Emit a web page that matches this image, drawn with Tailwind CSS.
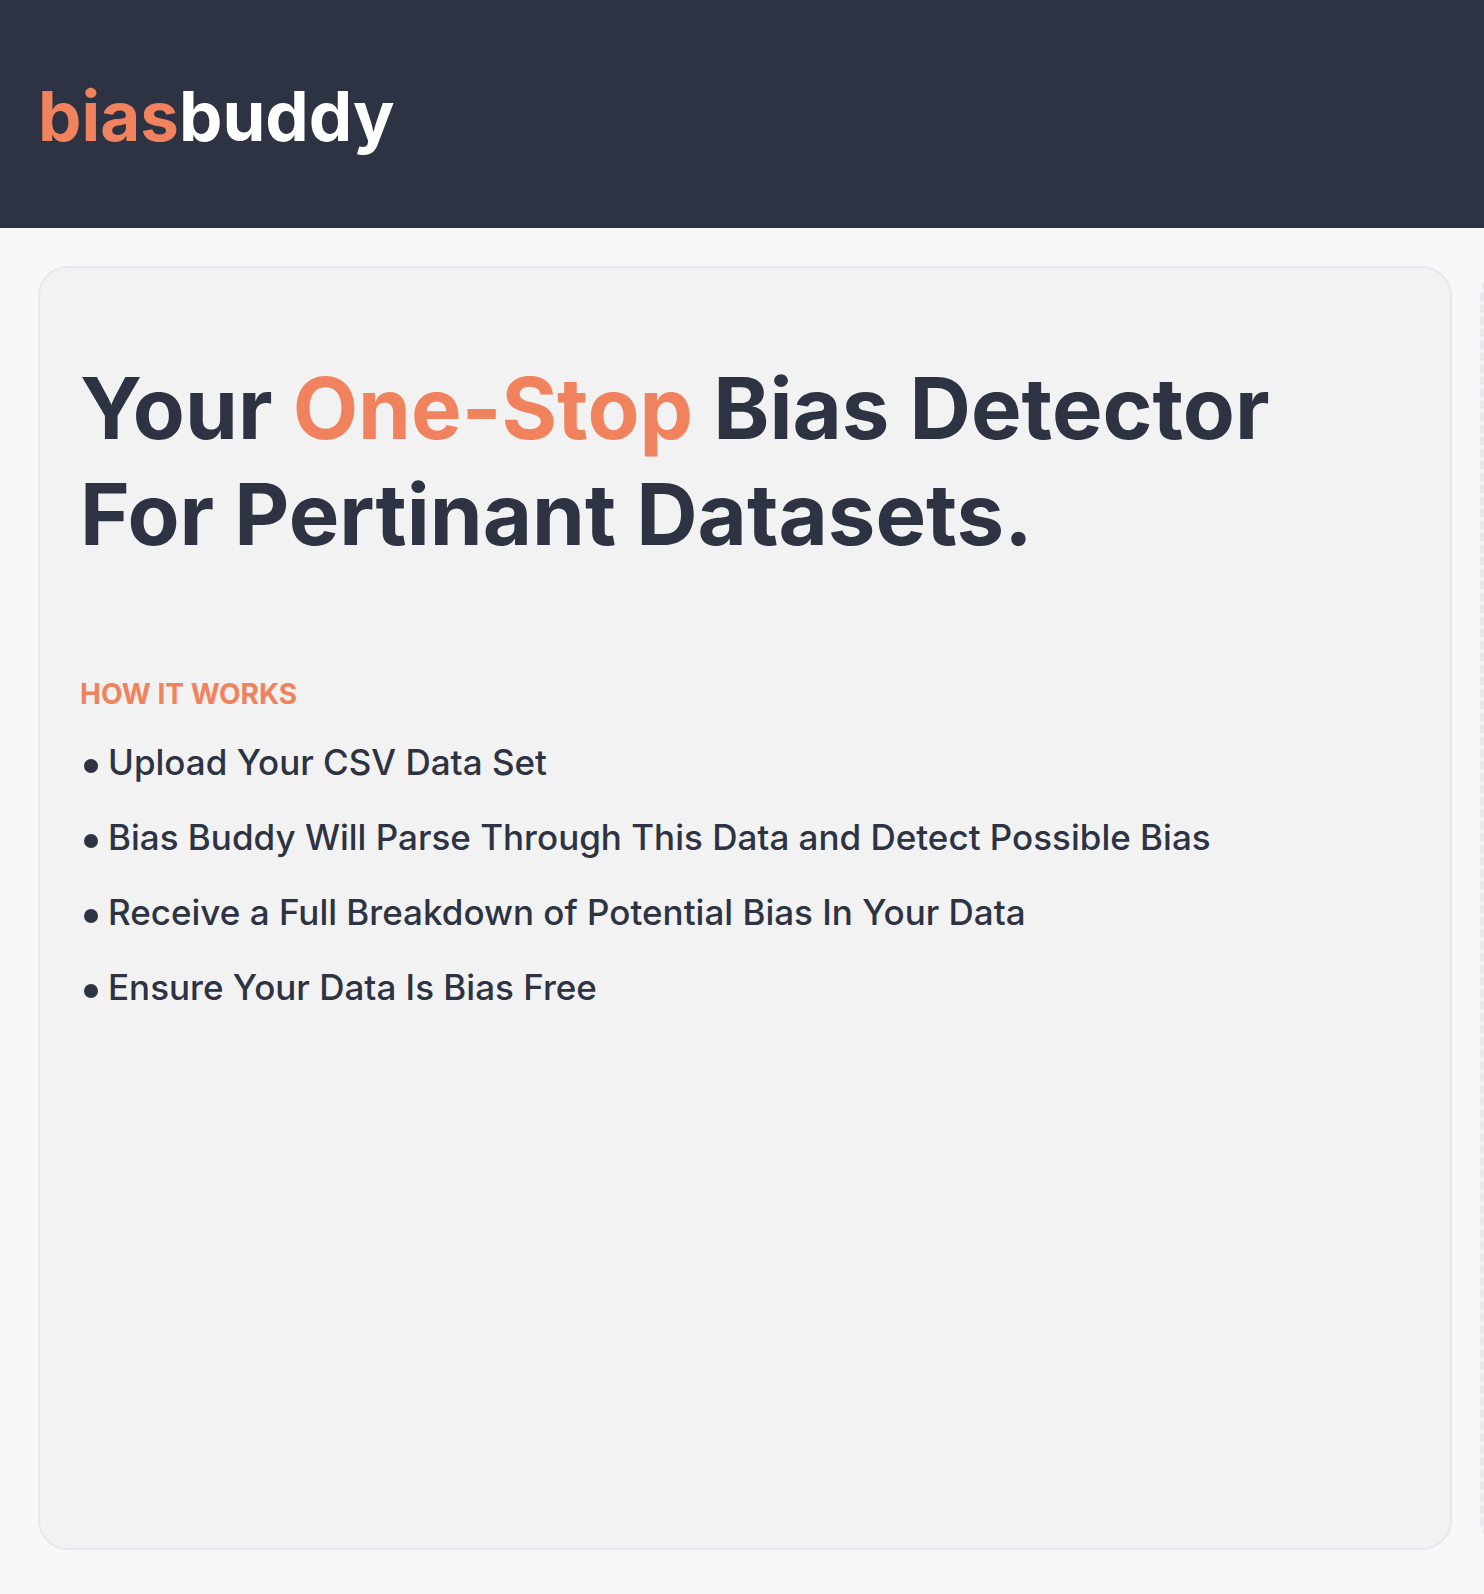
<!DOCTYPE html>
<html lang="en">
<head>
<meta charset="utf-8">
<meta name="viewport" content="width=device-width, initial-scale=1">
<title>biasbuddy</title>
<script src="https://cdn.jsdelivr.net/npm/@tailwindcss/browser@4"></script>
</head>
<body class="min-h-screen flex flex-col bg-[#f8f8f8] font-['Inter',sans-serif] text-[#2d3343]">
<header class="bg-[#2d3343] px-[38px] pt-[68px] pb-[64px]">
<a href="#" class="block text-[69px] leading-[96px] font-bold text-white"><span class="text-[#f0825d]">bias</span>buddy</a>
</header>
<main class="grow flex gap-7 overflow-hidden pt-[38px] pb-[44px] pl-[38px]">
<section class="grow min-w-0 rounded-[30px] border-2 border-[#e5e9ef] bg-[#f2f2f2] px-10 pt-[88px]">
<h1 class="text-[85px] leading-[106px] font-bold">Your <span class="text-[#f0825d]">One-Stop</span> Bias Detector<br>For Pertinant Datasets.</h1>
<h2 class="mt-[106px] text-[28px] leading-[40px] font-bold text-[#f0825d]">HOW IT WORKS</h2>
<ul class="mt-6 flex flex-col gap-[27px] text-[35px] leading-[48px] font-medium">
<li class="flex items-center gap-2.5"><span class="mt-2 ml-1 size-3.5 shrink-0 rounded-full bg-current"></span>Upload Your CSV Data Set</li>
<li class="flex items-center gap-2.5"><span class="mt-2 ml-1 size-3.5 shrink-0 rounded-full bg-current"></span>Bias Buddy Will Parse Through This Data and Detect Possible Bias</li>
<li class="flex items-center gap-2.5"><span class="mt-2 ml-1 size-3.5 shrink-0 rounded-full bg-current"></span>Receive a Full Breakdown of Potential Bias In Your Data</li>
<li class="flex items-center gap-2.5"><span class="mt-2 ml-1 size-3.5 shrink-0 rounded-full bg-current"></span>Ensure Your Data Is Bias Free</li>
</ul>
</section>
<section aria-label="Upload" class="-mr-[600px] w-[604px] shrink-0 rounded-[30px] border-4 border-dashed border-[#e5e9ef] bg-[#f2f2f2]"></section>
</main>
</body>
</html>
